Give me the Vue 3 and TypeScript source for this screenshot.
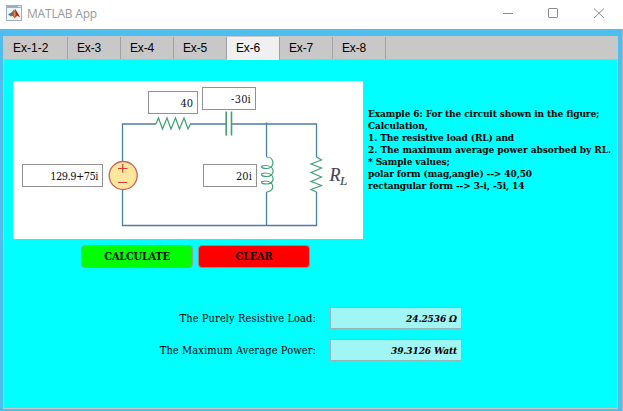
<script setup lang="ts">
import { ref } from 'vue'

const tabs: string[] = ['Ex-1-2', 'Ex-3', 'Ex-4', 'Ex-5', 'Ex-6', 'Ex-7', 'Ex-8']
const active = ref('Ex-6')

const source = ref('129.9+75i')
const resistor = ref('40')
const capacitor = ref('-30i')
const inductor = ref('20i')

const notes: string[] = [
  'Example 6: For the circuit shown in the figure;',
  'Calculation,',
  '1. The resistive load (RL) and',
  '2. The maximum average power absorbed by RL.',
  '* Sample values;',
  'polar form (mag,angle) --> 40,50',
  'rectangular form --> 3-i, -5i, 14',
]
</script>

<template>
  <div class="window">
    <header class="titlebar">
      <svg class="logo" viewBox="0 0 16 16">
        <rect x="0.5" y="0.5" width="15" height="15" fill="#f1f3f5" stroke="#a3adb7" />
        <rect x="0" y="0" width="16" height="3" fill="#8fb4cc" />
        <rect x="12" y="1" width="3" height="1" fill="#dce9f2" />
        <path d="M2 9.4 L5.5 7.6 L8.4 4.3 L7.2 9.2 L4.8 11.2Z" fill="#3d7796" />
        <path d="M4.8 11.2 L7 8.6 L9.2 4 L11 7.3 L14 12.2 L11.3 10.8 L8.6 13.2 L7 11Z" fill="#c4441d" />
        <path d="M9.2 4 L9.5 9.8 L8.3 12.2 L7.5 10.5Z" fill="#ef8b2c" />
        <path d="M9.2 4 L10.4 9.6 L14 12.2 L11 7.3Z" fill="#8c2318" />
      </svg>
      <span class="title">MATLAB App</span>
      <svg class="controls" viewBox="0 0 104 12">
        <path d="M1 6.5H11" />
        <rect x="46.5" y="1.5" width="9" height="9" rx="0.6" />
        <path d="M92 1.5L102 11M102 1.5L92 11" />
      </svg>
    </header>
    <div class="frame">
      <nav class="tabs">
        <button
          v-for="t in tabs"
          :key="t"
          class="tab"
          :class="{ active: t === active }"
          @click="active = t"
        >{{ t }}</button>
      </nav>
      <main class="page">
        <section class="top">
          <div class="circuit">
            <svg class="drawing" viewBox="13 81 350 158">
              <g class="wire">
                <path d="M156 124H122.5V162M122.5 189V225.5H316.5V192M190 124H226M231.5 124H316.5V157M266.5 122.5V157M266.5 192V225.5" />
              </g>
              <g class="part">
                <path d="M156 124L158.5 118L162.5 129L167 118L171 129L175.5 118L179.5 129L184 118L188 129L190.5 124" />
                <path d="M226.2 111.5V135.5M231.5 111.5V135.5" class="plate" />
                <path d="M316.5 157L321.5 160L311 164L321.5 168L311 172.5L321.5 177L311 181.5L321.5 185.5L311 189.5L316.5 192" />
                <path d="M266.5 157C275 157 275 168.5 267 168.5C260 168.5 260 165.5 265 165.5C276 165.5 275 176.5 267 176.5C260 176.5 260 173 265 173C276 173 275 184 267 184C260 184 260 181 265 181C275 181 275 191.5 266.5 192" />
              </g>
              <circle cx="123.2" cy="175.5" r="14" class="source" />
              <path d="M118 168.5H127.5M122.7 164V172.5M118 182.5H127" class="sign" />
              <text x="329.5" y="181" class="load">R</text>
              <text x="340" y="184.5" class="sub">L</text>
            </svg>
            <input v-model="resistor" class="field r1" />
            <input v-model="capacitor" class="field c1" />
            <input v-model="source" class="field v1" />
            <input v-model="inductor" class="field l1" />
          </div>
          <div class="notes">
            <div v-for="line in notes" :key="line">{{ line }}</div>
          </div>
        </section>
        <div class="actions">
          <button class="btn go">CALCULATE</button>
          <button class="btn clear">CLEAR</button>
        </div>
        <section class="results">
          <label>The Purely Resistive Load:</label>
          <output>24.2536 Ω</output>
          <label>The Maximum Average Power:</label>
          <output>39.3126 Watt</output>
        </section>
      </main>
    </div>
  </div>
</template>

<style>
body { margin: 0; overflow: hidden; }
</style>

<style scoped>
* { box-sizing: border-box; }
.window {
  width: 623px;
  height: 411px;
  display: flex;
  flex-direction: column;
  background: #fff;
  font-family: "DejaVu Serif Condensed", "DejaVu Serif", serif;
  font-stretch: condensed;
  color: #000;
}
.titlebar {
  height: 29px;
  display: flex;
  align-items: center;
  padding: 0 17px 3px 6px;
  background: #fff;
}
.logo { width: 16px; height: 16px; }
.title {
  margin-left: 5px;
  padding-top: 2px;
  font: 12px/16px "Open Sans", sans-serif;
  letter-spacing: -0.2px;
  color: #999;
}
.controls {
  width: 104px;
  height: 12px;
  margin-left: auto;
  fill: none;
  stroke: #8b8b8b;
  stroke-width: 1;
}
.frame {
  flex: 1;
  display: flex;
  flex-direction: column;
  padding: 7px 4px 2px 3px;
  background: #4dbeee;
  border-right: 1px solid #b3b5b5;
}
.tabs {
  height: 24px;
  display: flex;
  background: #c8c8c8;
  padding: 1px 0 0 1px;
  border-bottom: 1px solid #b9bcbc;
}
.tab {
  width: 53px;
  height: 22px;
  padding: 1px 0 1px 9px;
  border: 0;
  border-right: 1px solid #a0a0a0;
  background: #c8c8c8;
  font: 12px/20px "Liberation Sans", Arial, sans-serif;
  letter-spacing: -0.15px;
  text-align: left;
  color: #000;
}
.tab:first-child { width: 64px; letter-spacing: 0; }
.tab.active { height: 23px; padding-bottom: 2px; background: #f0f0f0; }
.page {
  flex: 1;
  background: #00ffff;
  border: solid #c8c8c8;
  border-width: 0 1px 1px;
  padding: 21px 0 0 9px;
}
.top { display: flex; }
.circuit {
  position: relative;
  width: 350px;
  height: 158px;
  background: #fff;
}
.drawing { display: block; width: 350px; height: 158px; fill: none; }
.wire { stroke: #4e7ca8; stroke-width: 1.3; }
.part { stroke: #43a076; stroke-width: 1.2; }
.plate { stroke-width: 1.6; }
.source { fill: #ffe69d; stroke: #c96357; stroke-width: 1.3; }
.sign { stroke: #d23c3c; stroke-width: 1.2; }
.load, .sub {
  font-family: "Liberation Serif", serif;
  font-style: italic;
  fill: #45454f;
  stroke: #45454f;
  stroke-width: 0.15;
}
.load { font-size: 18px; }
.sub { font-size: 13px; }
.field {
  position: absolute;
  height: 23px;
  padding: 1px 4px 0;
  border: 1px solid #929292;
  background: #fff;
  font: condensed 11px/20px "DejaVu Serif Condensed", "DejaVu Serif", serif;
  letter-spacing: -0.5px;
  text-align: right;
  color: #111;
}
.r1 { left: 135px; top: 10px; width: 50px; letter-spacing: 0; }
.c1 { left: 189px; top: 6px; width: 54px; letter-spacing: 0.2px; }
.v1 { left: 9px; top: 83px; width: 81px; }
.l1 { left: 190px; top: 83px; width: 54px; letter-spacing: 0.1px; }
.notes {
  padding: 27px 0 0 5px;
  font-size: 10px;
  line-height: 12px;
  font-weight: bold;
  white-space: nowrap;
  letter-spacing: -0.1px;
}
.notes div:nth-child(4) { letter-spacing: -0.03px; }
.actions { display: flex; gap: 5px; padding: 6px 0 0 68px; }
.btn {
  width: 112px;
  height: 23px;
  padding: 0;
  border: 1px solid #8ba58d;
  border-radius: 4px;
  font: bold condensed 11px/21px "DejaVu Serif Condensed", "DejaVu Serif", serif;
  letter-spacing: -0.3px;
  color: #001000;
}
.go { background: #00ff00; }
.clear { background: #ff0000; border-color: #b08080; }
.results {
  display: grid;
  grid-template-columns: 303px 132px;
  grid-auto-rows: 22px;
  gap: 10px 14px;
  padding-top: 39px;
  font-size: 11px;
  line-height: 23px;
  text-align: right;
  letter-spacing: 0.1px;
}
.results output {
  padding-right: 4px;
  border: 1px solid #98b4b4;
  background: #a0f5f5;
  font-size: 10px;
  font-weight: bold;
  font-style: italic;
  line-height: 21px;
  letter-spacing: -0.1px;
}
</style>
